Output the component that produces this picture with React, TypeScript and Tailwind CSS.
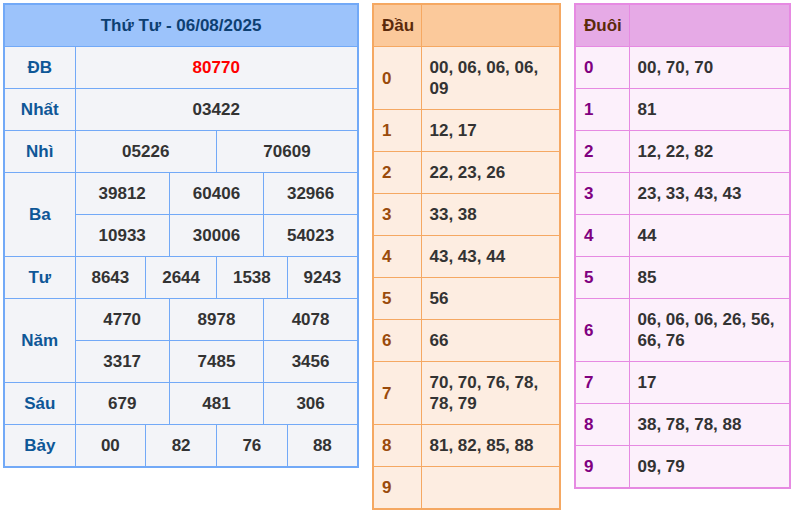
const BLUE = 'border border-[#72a9f7]';
const ORANGE = 'border border-[#f5a862]';
const PINK = 'border border-[#e68ae2]';

type Cell = { v: string; span: number };

const row = (vals: string[], span: number): Cell[] => vals.map((v) => ({ v, span }));

const PRIZES: { label: string; rows: Cell[][]; red?: boolean }[] = [
  { label: 'ĐB', rows: [row(['80770'], 12)], red: true },
  { label: 'Nhất', rows: [row(['03422'], 12)] },
  { label: 'Nhì', rows: [row(['05226', '70609'], 6)] },
  {
    label: 'Ba',
    rows: [row(['39812', '60406', '32966'], 4), row(['10933', '30006', '54023'], 4)],
  },
  { label: 'Tư', rows: [row(['8643', '2644', '1538', '9243'], 3)] },
  {
    label: 'Năm',
    rows: [row(['4770', '8978', '4078'], 4), row(['3317', '7485', '3456'], 4)],
  },
  { label: 'Sáu', rows: [row(['679', '481', '306'], 4)] },
  { label: 'Bảy', rows: [row(['00', '82', '76', '88'], 3)] },
];

const DAU = [
  '00, 06, 06, 06, 09',
  '12, 17',
  '22, 23, 26',
  '33, 38',
  '43, 43, 44',
  '56',
  '66',
  '70, 70, 76, 78, 78, 79',
  '81, 82, 85, 88',
  '',
];

const DUOI = [
  '00, 70, 70',
  '81',
  '12, 22, 82',
  '23, 33, 43, 43',
  '44',
  '85',
  '06, 06, 06, 26, 56, 66, 76',
  '17',
  '38, 78, 78, 88',
  '09, 79',
];

function ResultTable() {
  return (
    <table className="w-[356px] shrink-0 table-fixed border-collapse border-2 border-[#72a9f7] text-[17px] font-bold leading-[21px]">
      <colgroup>
        <col className="w-[71px]" />
        {Array.from({ length: 12 }).map((_, i) => (
          <col key={i} />
        ))}
      </colgroup>
      <tbody>
        <tr className="bg-[#9cc3fb]">
          <td colSpan={13} className={`${BLUE} py-[10px] text-center text-[#0d3f72]`}>
            Thứ Tư - 06/08/2025
          </td>
        </tr>
        {PRIZES.map((p) =>
          p.rows.map((cells, ri) => (
            <tr key={p.label + ri} className="bg-[#f3f4f8]">
              {ri === 0 && (
                <td
                  rowSpan={p.rows.length}
                  className={`${BLUE} py-[10px] text-center align-middle text-[#0e5797]`}
                >
                  {p.label}
                </td>
              )}
              {cells.map((c, ci) => (
                <td
                  key={ci}
                  colSpan={c.span}
                  className={`${BLUE} py-[10px] text-center ${p.red ? 'text-[#ff0000]' : 'text-[#333333]'}`}
                >
                  {c.v}
                </td>
              ))}
            </tr>
          ))
        )}
      </tbody>
    </table>
  );
}

interface LotoProps {
  title: string;
  items: string[];
  width: string;
  firstCol: string;
  border: string;
  tableBorder: string;
  headBg: string;
  bodyBg: string;
  digitColor: string;
}

function LotoTable({ title, items, width, firstCol, border, tableBorder, headBg, bodyBg, digitColor }: LotoProps) {
  return (
    <table className={`${width} shrink-0 ml-[13px] table-fixed border-collapse border-2 ${tableBorder} text-[17px] font-bold leading-[21px]`}>
      <colgroup>
        <col className={firstCol} />
        <col />
      </colgroup>
      <tbody>
        <tr className={headBg}>
          <td className={`${border} px-2 py-[10px] text-left text-[#5b2a0b]`}>{title}</td>
          <td className={`${border} px-2 py-[10px]`} />
        </tr>
        {items.map((v, i) => (
          <tr key={i} className={bodyBg}>
            <td className={`${border} px-2 py-[10px] align-middle ${digitColor}`}>{i}</td>
            <td className={`${border} px-2 py-[10px] align-middle text-[#333333]`}>
              {v || '\u00a0'}
            </td>
          </tr>
        ))}
      </tbody>
    </table>
  );
}

export default function App() {
  return (
    <div className="flex items-start bg-white p-[3px] font-['Liberation_Sans',Arial,sans-serif]">
      <ResultTable />
      <LotoTable
        title="Đầu"
        items={DAU}
        width="w-[189px]"
        firstCol="w-[48px]"
        border={ORANGE}
        tableBorder="border-[#f5a862]"
        headBg="bg-[#fbc99b]"
        bodyBg="bg-[#fdede1]"
        digitColor="text-[#9a4b0c]"
      />
      <LotoTable
        title="Đuôi"
        items={DUOI}
        width="w-[217px]"
        firstCol="w-[54px]"
        border={PINK}
        tableBorder="border-[#e68ae2]"
        headBg="bg-[#e6aae6]"
        bodyBg="bg-[#fcf0fb]"
        digitColor="text-[#800080]"
      />
    </div>
  );
}
